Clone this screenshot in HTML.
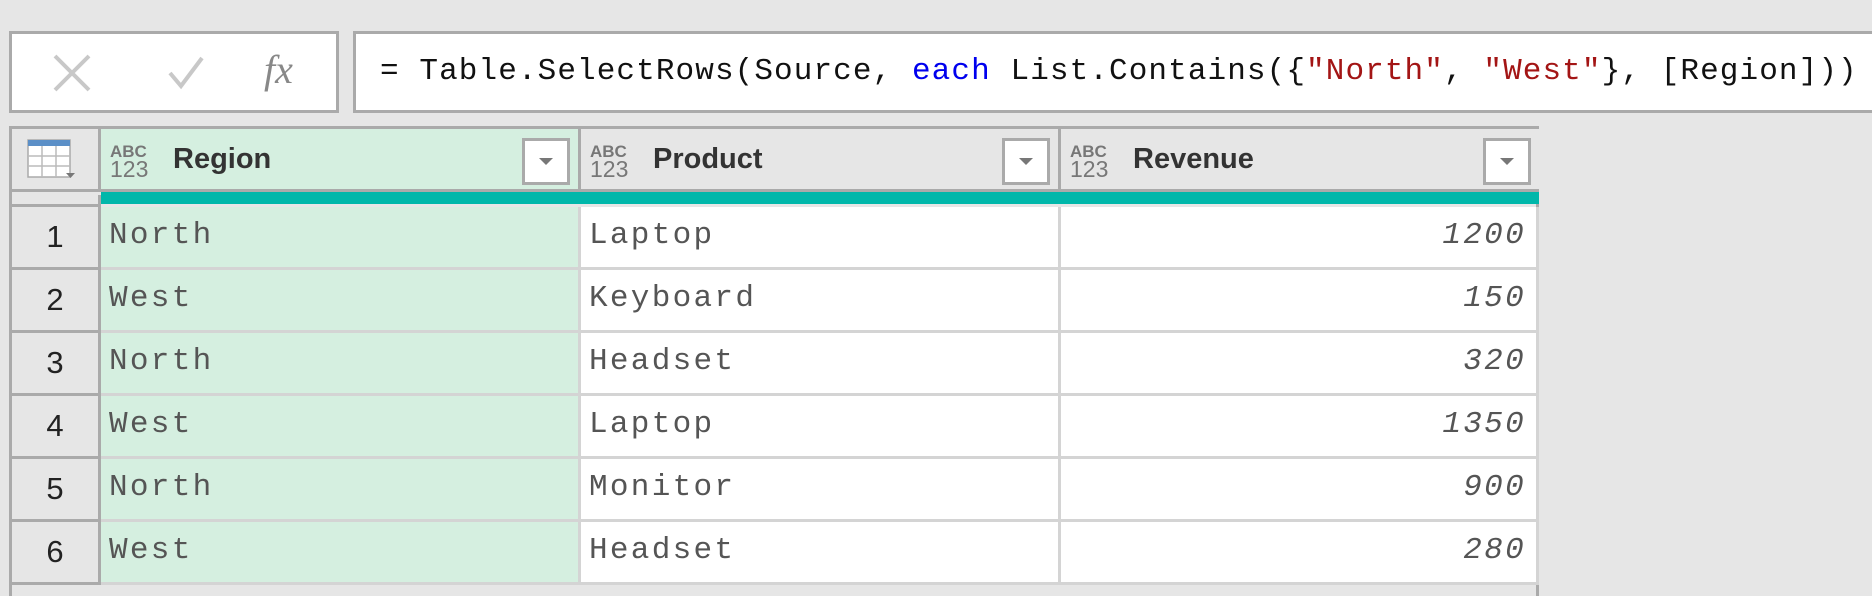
<!DOCTYPE html>
<html><head><meta charset="utf-8"><style>
*{margin:0;padding:0;box-sizing:border-box}
body{width:1872px;height:584px;background:#e6e6e6;position:relative;overflow:hidden;font-family:"Liberation Sans",sans-serif}
.abs{position:absolute}
#fxbox{left:9px;top:31px;width:330px;height:82px;background:#fff;border:3px solid #aaa}
#formula{left:353px;top:31px;width:1530px;height:82px;background:#fff;border:3px solid #aaa;font-family:"Liberation Mono",monospace;font-size:31px;line-height:76px;padding-left:24px;color:#111;white-space:pre;letter-spacing:1.1px}
.kw{color:#0000ee}.str{color:#a31515}
#table{left:9px;top:126px;width:1530px;height:470px;border:3px solid #aaa;border-bottom:none}
.hdr{top:0;height:63px;background:#e6e6e6;border-right:3px solid #aaa;border-bottom:3px solid #aaa}
.hname{position:absolute;left:72px;top:14px;font-weight:bold;font-size:29px;color:#333}
.abc{position:absolute;left:9px;top:15px;font-size:17px;line-height:15px;color:#777;font-weight:bold;letter-spacing:0}
.abc b{display:block;font-size:23px;font-weight:normal;line-height:20px}
.dd{position:absolute;right:8px;top:9px;width:48px;height:47px;background:#fff;border:3px solid #aaa}
.dd:after{content:"";position:absolute;left:14px;top:17px;border-left:7px solid transparent;border-right:7px solid transparent;border-top:7px solid #777}
.teal{top:63px;height:12px;background:#00b7aa}
.cell{height:63px;border-bottom:3px solid #d4d4d4;border-right:3px solid #d4d4d4;font-family:"Liberation Mono",monospace;font-size:31px;color:#555;line-height:58px;padding-left:8px;letter-spacing:2.3px;background:#fff}
.num{background:#e6e6e6;border-right:3px solid #aaa;border-bottom:3px solid #aaa;text-align:center;font-size:31px;color:#222;line-height:60px;height:63px}
.rev{text-align:right;padding-right:10px;font-style:italic}
</style></head><body>
<div id="fxbox" class="abs">
<svg class="abs" style="left:39px;top:18px" width="42" height="42" viewBox="0 0 42 42"><path d="M4 4L38 38M38 4L4 38" stroke="#c8c8c8" stroke-width="4" fill="none"/></svg>
<svg class="abs" style="left:155px;top:20px" width="38" height="36" viewBox="0 0 38 36"><path d="M3 19L14 32L35 4" stroke="#c8c8c8" stroke-width="4" fill="none"/></svg>
<div class="abs" style="left:252px;top:12px;font-family:'Liberation Serif',serif;font-style:italic;font-size:40px;color:#888">fx</div>
</div>
<div id="formula" class="abs">= Table.SelectRows(Source, <span class="kw">each</span> List.Contains({<span class="str">"North"</span>, <span class="str">"West"</span>}, [Region]))</div>
<div id="table" class="abs">
 <div class="abs hdr" style="left:0;width:89px">
  <svg class="abs" style="left:15px;top:10px" width="48" height="42" viewBox="0 0 48 42"><rect x="1" y="1" width="42" height="37" fill="#fff" stroke="#aaa" stroke-width="1.5"/><rect x="1" y="1" width="42" height="6" fill="#5b8fc7"/><path d="M1 17H43M1 27H43M15 7V38M29 7V38" stroke="#bbb" stroke-width="1.5"/><path d="M39 34L48 34L43.5 39Z" fill="#777"/></svg>
 </div>
 <div class="abs" style="left:0;top:66px;width:89px;height:12px;background:#e6e6e6;border-right:3px solid #aaa;border-bottom:3px solid #aaa"></div>
 <div class="abs hdr" style="left:89px;width:480px;background:#d5efe0"><div class="abc">ABC<b>123</b></div><div class="hname">Region</div><div class="dd"></div></div>
 <div class="abs hdr" style="left:569px;width:480px"><div class="abc">ABC<b>123</b></div><div class="hname">Product</div><div class="dd"></div></div>
 <div class="abs hdr" style="left:1049px;width:478px;border-right:none"><div class="abc">ABC<b>123</b></div><div class="hname">Revenue</div><div class="dd"></div></div>
 <div class="abs teal" style="left:89px;width:1438px;top:63px"></div>
 <div class="abs" style="left:0;top:78px;width:1527px">
  <div style="display:flex"><div class="num" style="width:89px">1</div><div class="cell" style="width:480px;background:#d5efe0">North</div><div class="cell" style="width:480px">Laptop</div><div class="cell rev" style="width:478px">1200</div></div>
  <div style="display:flex"><div class="num" style="width:89px">2</div><div class="cell" style="width:480px;background:#d5efe0">West</div><div class="cell" style="width:480px">Keyboard</div><div class="cell rev" style="width:478px">150</div></div>
  <div style="display:flex"><div class="num" style="width:89px">3</div><div class="cell" style="width:480px;background:#d5efe0">North</div><div class="cell" style="width:480px">Headset</div><div class="cell rev" style="width:478px">320</div></div>
  <div style="display:flex"><div class="num" style="width:89px">4</div><div class="cell" style="width:480px;background:#d5efe0">West</div><div class="cell" style="width:480px">Laptop</div><div class="cell rev" style="width:478px">1350</div></div>
  <div style="display:flex"><div class="num" style="width:89px">5</div><div class="cell" style="width:480px;background:#d5efe0">North</div><div class="cell" style="width:480px">Monitor</div><div class="cell rev" style="width:478px">900</div></div>
  <div style="display:flex"><div class="num" style="width:89px">6</div><div class="cell" style="width:480px;background:#d5efe0">West</div><div class="cell" style="width:480px">Headset</div><div class="cell rev" style="width:478px">280</div></div>
 </div>
</div>
</body></html>
